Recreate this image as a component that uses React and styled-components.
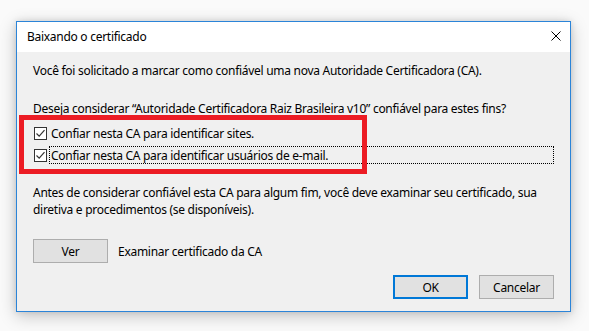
import React from "react";
import styled, { createGlobalStyle } from "styled-components";

const GlobalStyle = createGlobalStyle`
  html, body {
    margin: 0;
    padding: 0;
    background: #fafafa;
  }
  body {
    font-family: "Noto Sans", "Open Sans", sans-serif;
    font-size: 12px;
    letter-spacing: -0.28px;
    color: #000;
  }
`;

const Page = styled.div`
  position: relative;
  width: 589px;
  height: 331px;
  padding: 21px 0 0 16px;
  box-sizing: border-box;
  overflow: hidden;
`;

const Window = styled.div`
  width: 555px;
  height: 291px;
  box-sizing: border-box;
  border: 1px solid #2b84d8;
  background: #f0f0f0;
  box-shadow: 0 4px 16px rgba(0, 0, 0, 0.22), 0 0 6px rgba(0, 0, 0, 0.12);
  display: flex;
  flex-direction: column;
  overflow: hidden;
`;

const TitleBar = styled.div`
  height: 30px;
  flex: none;
  background: #fff;
  display: flex;
  align-items: center;
  justify-content: space-between;
  padding: 0 9px 0 10px;
`;

const Title = styled.span`
  font-size: 12px;
  line-height: 16px;
`;

const CloseButton = styled.button`
  border: 0;
  background: transparent;
  padding: 0;
  width: 10px;
  height: 10px;
  display: flex;
  margin-top: -2px;
`;

const Body = styled.div`
  flex: 1;
  display: flex;
  flex-direction: column;
  padding: 11px 16px 0 16px;
`;

const Text = styled.p`
  margin: ${(p) => p.$mt || 0}px 0 0 0;
  line-height: ${(p) => p.$lh || 16}px;
  white-space: nowrap;
`;

const CheckList = styled.div`
  display: flex;
  flex-direction: column;
  gap: 4px;
  margin-top: 7px;
`;

const CheckRow = styled.label`
  display: flex;
  align-items: center;
  height: 18px;
`;

const Box = styled.span`
  width: 13px;
  height: 13px;
  box-sizing: border-box;
  border: 1px solid #333;
  background: #fff;
  margin-left: 1px;
  display: flex;
  align-items: center;
  justify-content: center;
  flex: none;
`;

const CheckLabel = styled.span`
  flex: 1;
  margin-left: 2px;
  height: 18px;
  box-sizing: border-box;
  display: flex;
  align-items: center;
  padding-left: 1px;
  white-space: nowrap;
  border: 1px dotted ${(p) => (p.$focused ? "#000" : "transparent")};
`;

const ActionRow = styled.div`
  display: flex;
  align-items: center;
  margin-top: 21px;
  gap: 10px;
`;

const Button = styled.button`
  width: 75px;
  height: 24px;
  box-sizing: border-box;
  font-family: inherit;
  font-size: 12px;
  letter-spacing: inherit;
  color: #000;
  background: #e1e1e1;
  border: ${(p) => (p.$default ? "2px solid #0078d7" : "1px solid #adadad")};
  padding: 0;
`;

const Footer = styled.div`
  display: flex;
  justify-content: flex-end;
  gap: 11px;
  margin-top: 12px;
`;

const Highlight = styled.div`
  position: absolute;
  left: 19px;
  top: 115px;
  width: 348px;
  height: 59px;
  box-sizing: border-box;
  border: 5px solid #ec1c24;
  pointer-events: none;
`;

function Check() {
  return (
    <svg width="11" height="11" viewBox="0 0 11 11">
      <path d="M1.5 5.5 L4.2 8.2 L9.5 2.2" fill="none" stroke="#333" strokeWidth="1.2" />
    </svg>
  );
}

export default function App() {
  return (
    <>
      <GlobalStyle />
      <Page>
        <Window>
          <TitleBar>
            <Title>Baixando o certificado</Title>
            <CloseButton aria-label="Fechar">
              <svg width="10" height="10" viewBox="0 0 10 10">
                <path d="M0.5 0.5 L9.5 9.5 M9.5 0.5 L0.5 9.5" stroke="#000" strokeWidth="1" />
              </svg>
            </CloseButton>
          </TitleBar>
          <Body>
            <Text>Você foi solicitado a marcar como confiável uma nova Autoridade Certificadora (CA).</Text>
            <Text $mt={22}>Deseja considerar “Autoridade Certificadora Raiz Brasileira v10” confiável para estes fins?</Text>
            <CheckList>
              <CheckRow>
                <Box><Check /></Box>
                <CheckLabel>Confiar nesta CA para identificar sites.</CheckLabel>
              </CheckRow>
              <CheckRow>
                <Box><Check /></Box>
                <CheckLabel $focused>Confiar nesta CA para identificar usuários de e-mail.</CheckLabel>
              </CheckRow>
            </CheckList>
            <Text $mt={20} $lh={17}>
              Antes de considerar confiável esta CA para algum fim, você deve examinar seu certificado, sua
              <br />
              diretiva e procedimentos (se disponíveis).
            </Text>
            <ActionRow>
              <Button>Ver</Button>
              <span>Examinar certificado da CA</span>
            </ActionRow>
            <Footer>
              <Button $default>OK</Button>
              <Button>Cancelar</Button>
            </Footer>
          </Body>
        </Window>
        <Highlight />
      </Page>
    </>
  );
}
